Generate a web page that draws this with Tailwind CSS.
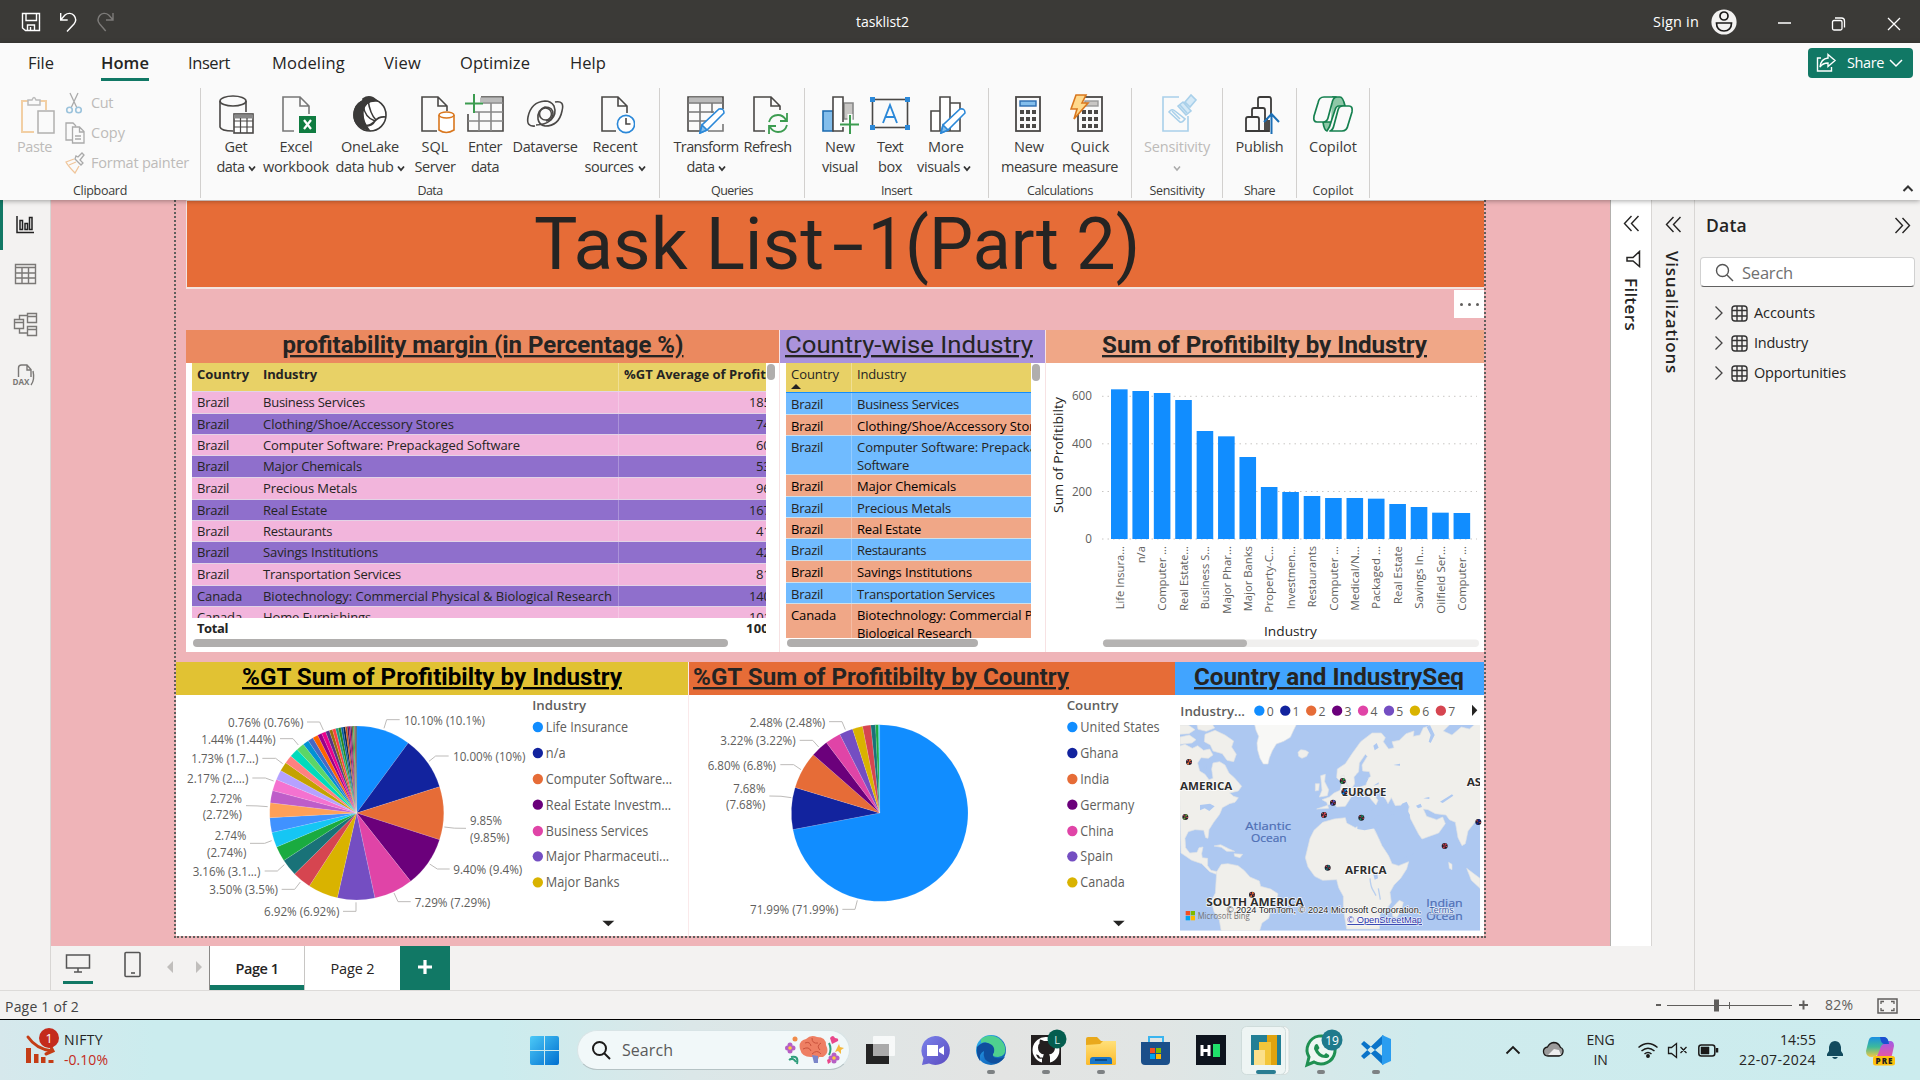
<!DOCTYPE html>
<html lang="en">
<head>
<meta charset="utf-8">
<title>tasklist2</title>
<script src="https://cdn.jsdelivr.net/npm/@tailwindcss/browser@4"></script>
</head>
<body class="w-[1920px] h-[1080px] overflow-hidden bg-[#f3f2f1] font-['Open_Sans','Noto_Sans',sans-serif] text-[#252423] whitespace-nowrap">

<!-- Title bar -->
<header class="h-[43px] bg-[#3b3a37] text-white flex items-center relative">
  <svg class="ml-[21px] mt-px" width="94" height="22" viewBox="0 0 94 22" fill="none" stroke="#fff" stroke-width="1.4">
    <path d="M1.500 2.500h17v17h-14l-3-2.500zM5 2.500v7h10.500v-7M6.500 19.500v-5.500h7v5.500M9.500 16v3"/>
    <path d="M39.700 2v7h7M40 8.500l4-4.500c3-2.500 7-2 9 .5s2 6 0 8.500L46 20.500"/>
    <path d="M92 2v7h-7M91.700 8.500l-4-4.500c-3-2.500-7-2-9 .5s-2 6 0 8.500l6 7" stroke="#7d7b79"/>
  </svg>
  <div class="ml-[741px] w-[53px] text-[14px] leading-5"><span data-w="53">tasklist2</span></div>
  <div class="ml-[744px] w-[46px] text-[14.500px]"><span data-w="46">Sign in</span></div>
  <svg class="ml-[12px]" width="26" height="26" viewBox="0 0 26 26"><circle cx="13" cy="13" r="12.600" fill="#f3f2f1"/><g fill="none" stroke="#1b1a19" stroke-width="1.700"><circle cx="13" cy="7" r="4"/><path d="M5.500 14h15c0 5-3 8-7.500 8s-7.500-3-7.500-8z"/></g></svg>
  <svg class="ml-[40px] mt-1" width="124" height="16" viewBox="0 0 124 16" fill="none" stroke="#fff" stroke-width="1.300"><path d="M1 7h13M111 2l12 12M123 2l-12 12"/><rect x="55.500" y="4.500" width="9.500" height="9.500" rx="1.500"/><path d="M58 2h6.500q3 0 3 3v6.500"/></svg>
</header>

<!-- Ribbon -->
<section class="h-[157px] bg-[#fafafa] relative z-10 shadow-[0_1px_5px_rgba(0,0,0,0.35)]">
  <nav class="h-[45px] flex items-start pl-[28px] pt-[8px] text-[16.500px] leading-6">
    <div class="w-[73px]"><span data-w="26">File</span></div>
    <div class="w-[87px] font-semibold"><div class="w-[48px] h-[30px] border-b-[3px] border-[#117865]"><span data-w="48">Home</span></div></div>
    <div class="w-[84px]"><span data-w="42">Insert</span></div>
    <div class="w-[112px]"><span data-w="73">Modeling</span></div>
    <div class="w-[76px]"><span data-w="37">View</span></div>
    <div class="w-[110px]"><span data-w="70">Optimize</span></div>
    <div><span data-w="36">Help</span></div>
    <div class="ml-auto mr-[7px] -mt-[3px] w-[105px] h-[30px] rounded bg-[#117865] text-white flex items-center pl-[8px] text-[14.500px]">
      <svg width="21" height="20" viewBox="0 0 21 20" fill="none" stroke="#fff" stroke-width="1.400"><path d="M5 5H1.500v13h14v-4M12 1.500l7 6-7 6v-3.500c-4 0-6 1-8 4 .5-5 3-8.500 8-9z"/></svg>
      <span class="ml-[10px]" data-w="37">Share</span>
      <svg class="ml-[5px]" width="14" height="9" viewBox="0 0 14 9" fill="none" stroke="#fff" stroke-width="1.500"><path d="M1 1l6 6 6-6"/></svg>
    </div>
  </nav>

  <div class="flex h-[110px] text-[14.500px] leading-5 text-[#3b3a39]">
    <!-- Clipboard -->
    <div class="w-[201px] border-r border-[#d2d0ce] flex flex-col">
      <div class="flex shrink-0 h-[90px] text-[#bdbbb9]">
        <div class="ml-[17px] w-[36px] pt-[6px]">
          <svg width="38" height="41" viewBox="0 0 38 41" fill="none" stroke-width="2"><path d="M17 38H5V7h6M23 7h6v9" stroke="#f2cfa4"/><path d="M11 11V6h4q2-5 4 0h4v5z" stroke="#bbb" stroke-width="1.500"/><rect x="21" y="17" width="16" height="22" stroke="#b1b0af" stroke-width="1.500" fill="#fafafa"/></svg>
          <div class="mt-[2px]"><span data-w="35">Paste</span></div>
        </div>
        <div class="ml-[11px]">
          <div class="flex h-[30px] items-center"><svg class="mr-[7px]" width="20" height="22" viewBox="0 0 20 22" fill="none" stroke="#aaa" stroke-width="1.300"><path d="M6 1l7 15M14 1L7 16"/><g stroke="#9cc3dc" stroke-width="1.600"><circle cx="5.500" cy="18" r="2.800"/><circle cx="14.500" cy="18" r="2.800"/></g></svg><span data-w="22">Cut</span></div>
          <div class="flex h-[30px] items-center"><svg class="mr-[5px]" width="22" height="22" viewBox="0 0 22 22" fill="none" stroke="#aaa" stroke-width="1.300"><path d="M8 18H2V1h7l3 3M8.500 5h7l4.500 4.500V21H8.500zM15.500 5v5H20M11 14h6M11 17h6"/></svg><span data-w="34">Copy</span></div>
          <div class="flex h-[30px] items-center"><svg class="mr-[5px]" width="22" height="22" viewBox="0 0 22 22" fill="none" stroke="#aaa" stroke-width="1.300"><path d="M11 7l6 6 2-2-3-3 4-5-2-2-4 4-2-1z"/><path d="M10 7L2 10c2 4 5 7 9 11l4-7M5 13l7-3" stroke="#f0c59a"/></svg><span data-w="98">Format painter</span></div>
        </div>
      </div>
      <div class="shrink-0 pt-[3px] text-center text-[12.500px]"><span data-w="54">Clipboard</span></div>
    </div>
    <!-- Data -->
    <div class="w-[459px] border-r border-[#d2d0ce] flex flex-col text-center">
      <div class="flex shrink-0 h-[90px] pl-[9px] pt-[6px]">
        <div class="w-[52px]"><svg class="mx-auto mb-[3px]" width="40" height="40" viewBox="0 0 40 40" fill="none" stroke="#4a4846" stroke-width="1.600"><ellipse cx="17" cy="7" rx="13" ry="5"/><path d="M4 7v26q1 4 13 4M30 7v11"/><rect x="18" y="20" width="19" height="19" fill="#fff"/><path d="M18 22.500h19" stroke="#888" stroke-width="4"/><path d="M18 27h19M18 33h19M24.500 24v15M31 24v15" stroke-width="1.200"/></svg><div><span data-w="23">Get</span></div><div><span data-w="28">data</span><svg class="inline ml-[3px]" width="8" height="7" viewBox="0 0 8 7"><path d="M1 1.500l3 3.500 3-3.500" fill="none" stroke="#333" stroke-width="1.800"/></svg></div></div>
        <div class="w-[68px]"><svg class="mx-auto mb-[3px]" width="40" height="40" viewBox="0 0 40 40" fill="none" stroke="#777" stroke-width="1.600"><path d="M18 37H7V3h17l9 9v8M24 3v9h9"/><rect x="23" y="22" width="17" height="17" fill="#107c41" stroke="none"/><path d="M28 26l7 9M35 26l-7 9" stroke="#fff" stroke-width="2.200"/></svg><div><span data-w="33">Excel</span></div><div><span data-w="66">workbook</span></div></div>
        <div class="w-[80px]"><svg class="mx-auto mb-[3px]" width="40" height="40" viewBox="0 0 40 40" fill="none" stroke="#3b3a39" stroke-width="1.600"><circle cx="20" cy="21" r="16" fill="#fff"/><path d="M13 5q7-5 14 2-12-1-14 10-1 10 6 19Q4 33 4 21q0-10 9-14z" fill="#3b3a39"/><path d="M13 11q2 13 12 16 4-5 11-4M25 27q-3 6-12 5M18 6q2 14 8 20M10 30q8 4 15-3"/></svg><div><span data-w="58">OneLake</span></div><div><span data-w="58">data hub</span><svg class="inline ml-[3px]" width="8" height="7" viewBox="0 0 8 7"><path d="M1 1.500l3 3.500 3-3.500" fill="none" stroke="#333" stroke-width="1.800"/></svg></div></div>
        <div class="w-[50px]"><svg class="mx-auto mb-[3px]" width="40" height="40" viewBox="0 0 40 40" fill="none" stroke="#4a4846" stroke-width="1.600"><path d="M22 37H7V3h16l9 9v5M23 3v9h9"/><g stroke="#d9771e"><path d="M24 21v15q7 5 15 0V21" fill="#fff"/><ellipse cx="31.500" cy="21" rx="7.500" ry="3" fill="#fff"/></g></svg><div><span data-w="27">SQL</span></div><div><span data-w="41">Server</span></div></div>
        <div class="w-[50px]"><svg class="mx-auto mb-[3px]" width="40" height="40" viewBox="0 0 40 40" fill="none" stroke="#4a4846" stroke-width="1.600"><path d="M16 3h22v34H3V20"/><path d="M15 6h22" stroke="#bbb" stroke-width="5"/><path d="M18 9h20M10 18h28M3 27h35M14 18v19M26 9v28" stroke="#888"/><path d="M9 0v19M0 9.500h18" stroke="#3c9c50" stroke-width="2"/></svg><div><span data-w="34">Enter</span></div><div><span data-w="28">data</span></div></div>
        <div class="w-[70px]"><svg class="mx-auto mb-[3px]" width="40" height="40" viewBox="0 0 40 40" fill="none" stroke="#4a4846" stroke-width="1.600"><path d="M30 8q10-2 7 9-3 15-17 15-6-1-7-7-1-9 7-12 8 0 8 7 0 6-7 7"/><path d="M10 32q-9 1-7-9Q6 8 20 7q6 0 9 5 3 8-3 14-6 5-15 5"/><circle cx="20.500" cy="20" r="6"/></svg><div><span data-w="65">Dataverse</span></div></div>
        <div class="w-[70px]"><svg class="mx-auto mb-[3px]" width="40" height="40" viewBox="0 0 40 40" fill="none" stroke="#4a4846" stroke-width="1.600"><path d="M21 37H7V3h16l9 9v7M23 3v9h9"/><circle cx="31" cy="30" r="8.600" stroke="#2b88d8" fill="#fff"/><path d="M31 24v6h4.500"/></svg><div><span data-w="45">Recent</span></div><div><span data-w="49">sources</span><svg class="inline ml-[4px]" width="8" height="7" viewBox="0 0 8 7"><path d="M1 1.500l3 3.500 3-3.500" fill="none" stroke="#333" stroke-width="1.800"/></svg></div></div>
      </div>
      <div class="shrink-0 pt-[3px] text-[12.500px]"><span data-w="25">Data</span></div>
    </div>
    <!-- Queries -->
    <div class="w-[145px] border-r border-[#d2d0ce] flex flex-col text-center">
      <div class="flex shrink-0 h-[90px] pl-[12px] pt-[6px]">
        <div class="w-[68px]"><svg class="mx-auto mb-[3px]" width="40" height="40" viewBox="0 0 40 40" fill="none" stroke="#4a4846" stroke-width="1.600"><path d="M14 37H2V3h35v12"/><path d="M3 6h33" stroke="#bbb" stroke-width="5"/><path d="M2 9h35M2 18h26M2 27h18M14 9v28M26 9v10M37 30v7h-15" stroke="#777"/><path d="M14 39l2-8 17-16q5-1 5 4L21 36z" stroke="#2b88d8" fill="#fff"/><path d="M14 39l2-8 5 5z" fill="#83beec" stroke="#2b88d8"/></svg><div><span data-w="65">Transform</span></div><div><span data-w="28">data</span><svg class="inline ml-[3px]" width="8" height="7" viewBox="0 0 8 7"><path d="M1 1.500l3 3.500 3-3.500" fill="none" stroke="#333" stroke-width="1.800"/></svg></div></div>
        <div class="w-[55px]"><svg class="mx-auto mb-[3px]" width="40" height="40" viewBox="0 0 40 40" fill="none" stroke="#4a4846" stroke-width="1.600"><path d="M17 37H6V3h17l9 9v4M23 3v9h9"/><path d="M21 28q2-7 9-7 5 0 8 5M39 19v8h-7M39 31q-2 7-9 7-5 0-8-5M21 40v-8h7" stroke="#3c9c50" stroke-width="1.800"/></svg><div><span data-w="48">Refresh</span></div></div>
      </div>
      <div class="shrink-0 pt-[3px] text-[12.500px]"><span data-w="42">Queries</span></div>
    </div>
    <!-- Insert -->
    <div class="w-[184px] border-r border-[#d2d0ce] flex flex-col text-center">
      <div class="flex shrink-0 h-[90px] pl-[10px] pt-[6px]">
        <div class="w-[50px]"><svg class="mx-auto mb-[3px]" width="40" height="40" viewBox="0 0 40 40" fill="none" stroke="#4a4846" stroke-width="1.600"><path d="M24 9h9v16h-9z" fill="#c8c6c4" stroke="#888"/><path d="M3 17h10v20H3z" fill="#83beec" stroke="#1c6bb0"/><path d="M13 3h10v34H13z" fill="#fff"/><path d="M30 20v20M20 30.500h20" stroke="#fafafa" stroke-width="5"/><path d="M30 21v19M20 30.500h19" stroke="#3c9c50" stroke-width="2"/></svg><div><span data-w="30">New</span></div><div><span data-w="36">visual</span></div></div>
        <div class="w-[50px]"><svg class="mx-auto mb-[3px]" width="40" height="40" viewBox="0 0 40 40" fill="none" stroke="#4a4846" stroke-width="1.600"><rect x="2.500" y="5.500" width="35" height="28"/><g fill="#2b88d8" stroke="none"><path d="M0 3h5v5H0zM35 3h5v5h-5zM0 31h5v5H0zM35 31h5v5h-5z"/></g><path d="M13 29l7-18 7 18M15.500 23h9" stroke="#2b88d8" stroke-width="1.900"/></svg><div><span data-w="26">Text</span></div><div><span data-w="24">box</span></div></div>
        <div class="w-[58px]"><svg class="ml-[12px] mb-[3px]" width="40" height="40" viewBox="0 0 40 40" fill="none" stroke="#4a4846" stroke-width="1.600"><path d="M4 17h9v20H4zM13 3h10v34H13zM23 9h10v28H23z" fill="#fff"/><path d="M14 39l2-8 17-16q5-1 5 4L21 36z" stroke="#2b88d8" fill="#fff"/><path d="M14 39l2-8 5 5z" fill="#83beec" stroke="#2b88d8"/></svg><div class="pl-[4px]"><span data-w="36">More</span></div><div><span data-w="43">visuals</span><svg class="inline ml-[3px]" width="8" height="7" viewBox="0 0 8 7"><path d="M1 1.500l3 3.500 3-3.500" fill="none" stroke="#333" stroke-width="1.800"/></svg></div></div>
      </div>
      <div class="shrink-0 pt-[3px] text-[12.500px]"><span data-w="31">Insert</span></div>
    </div>
    <!-- Calculations -->
    <div class="w-[143px] border-r border-[#d2d0ce] flex flex-col text-center">
      <div class="flex shrink-0 h-[90px] pl-[11px] pt-[6px]">
        <div class="w-[58px]"><svg class="mx-auto mb-[3px]" width="40" height="40" viewBox="0 0 40 40" fill="none" stroke="#4a4846" stroke-width="1.800"><rect x="7" y="3" width="24" height="34"/><rect x="11" y="7" width="16" height="5" fill="#83beec" stroke="#2b6cb0" stroke-width="1.400"/><path d="M11 18h16M11 25h16M11 32h16" stroke-width="4" stroke-dasharray="4 2"/></svg><div><span data-w="30">New</span></div><div><span data-w="56">measure</span></div></div>
        <div class="w-[64px]"><svg class="mx-auto mb-[3px]" width="40" height="40" viewBox="0 0 40 40" fill="none" stroke="#4a4846" stroke-width="1.800"><rect x="8" y="3" width="24" height="34"/><rect x="15" y="7" width="13" height="5" fill="#c8c6c4" stroke="#999" stroke-width="1.400"/><path d="M12 18h16M12 25h16M12 32h16" stroke-width="4" stroke-dasharray="4 2"/><path d="M6 1h10l-4 8h6L4 25l3-10H1z" fill="#ffd98c" stroke="#d9771e" stroke-width="1.600"/></svg><div><span data-w="39">Quick</span></div><div><span data-w="56">measure</span></div></div>
      </div>
      <div class="shrink-0 pt-[3px] text-[12.500px]"><span data-w="66">Calculations</span></div>
    </div>
    <!-- Sensitivity -->
    <div class="w-[91px] border-r border-[#d2d0ce] flex flex-col text-center">
      <div class="shrink-0 h-[90px] pt-[6px] text-[#bdbbb9]"><svg class="mx-auto mb-[3px]" width="40" height="40" viewBox="0 0 40 40" fill="none" stroke="#a9d0ea" stroke-width="1.600"><path d="M22 3H6v34h25V22"/><path d="M12 18q3-4 6-1l10 8q-3 4-5 3zM15 17l8 8"/><path d="M21 12l5-4 8 9-5 4zM28 8l6-7 5 5-6 7zM23 11l7 8" fill="#d5e9f6"/></svg><div><span data-w="66">Sensitivity</span></div><svg class="mx-auto mt-[8px]" width="8" height="7" viewBox="0 0 8 7"><path d="M1 1.500l3 3.500 3-3.500" fill="none" stroke="#aaa" stroke-width="1.500"/></svg></div>
      <div class="shrink-0 pt-[3px] text-[12.500px]"><span data-w="55">Sensitivity</span></div>
    </div>
    <!-- Share -->
    <div class="w-[74px] border-r border-[#d2d0ce] flex flex-col text-center">
      <div class="shrink-0 h-[90px] pt-[6px]"><svg class="ml-[19px] mb-[3px]" width="40" height="40" viewBox="0 0 40 40" fill="none" stroke="#3b3a39" stroke-width="1.800"><path d="M4 37V25q0-2 2-2h9q2 0 2 2v12zM17 37h10V26M10 22v-6q0-2 2-2h9q2 0 2 2v21M16 13V5q0-2 2-2h9q2 0 2 2v15M25 24v13"/><path d="M29.500 20v20M22 28l7.500-8 7.500 8" stroke="#1c6fb5" stroke-width="2"/></svg><div><span data-w="48">Publish</span></div></div>
      <div class="shrink-0 pt-[3px] text-[12.500px]"><span data-w="31">Share</span></div>
    </div>
    <!-- Copilot -->
    <div class="w-[73px] border-r border-[#d2d0ce] flex flex-col text-center">
      <div class="shrink-0 h-[90px] pt-[6px]"><svg class="mx-auto mb-[3px]" width="42" height="40" viewBox="0 0 42 40" fill="none" stroke="#15804f" stroke-width="1.700" stroke-linejoin="round"><path d="M20 3h8q3 0 5 9h-6q-3 0-4 4l-4 12q-1 5-4 9-3-1-4-9h8" fill="#8dc7a7"/><path d="M12 3h12q-3 1-4 6l-4 15q-1 4-5 4H5q-4 0-3-6L6 9q1-6 6-6z" fill="#fafafa"/><path d="M30 37H18q3-1 4-6l4-15q1-4 5-4h6q4 0 3 6l-4 13q-1 6-6 6z" fill="#fafafa"/></svg><div><span data-w="48">Copilot</span></div></div>
      <div class="shrink-0 pt-[3px] text-[12.500px]"><span data-w="41">Copilot</span></div>
    </div>
    <svg class="ml-auto mr-[6px] mt-[96px]" width="12" height="9" viewBox="0 0 12 9"><path d="M1.500 7L6 2.500 10.500 7" fill="none" stroke="#333" stroke-width="2"/></svg>
  </div>
</section>

<main class="flex h-[790px]">
  <!-- View switcher -->
  <aside class="w-[51px] border-r border-[#d8d6d4] relative">
    <div class="absolute left-0 top-0 w-[3px] h-[50px] bg-[#117865]"></div>
    <svg width="50" height="200" viewBox="0 0 50 200" fill="none" stroke="#7a7876" stroke-width="1.400">
      <path d="M17 16v16.500h17M20 29.500v-9h2.500v9zM25 29.500v-6h2.500v6zM29.500 29.500v-12H32v12z" stroke="#222" stroke-width="1.500"/>
      <path d="M15.500 64.500h20v19h-20zM15.500 67.500h20M15.500 73h20M15.500 78h20M22 67.500v16M28.500 67.500v16"/>
      <path d="M14.500 119.500h9v9h-9zM14.500 122.500h9M27.500 113.500h9v9h-9zM27.500 116.500h9M27.500 126.500h9v9h-9zM27.500 129.500h9M19.500 119v-3.500h8M19.500 129v4h8"/>
      <path d="M18.500 177v-9q0-3 3-3h5.500l4 4.500V177M27 165v5h4M33 171q2 9-2 14"/>
      <text x="12.500" y="185" font-size="8" font-weight="700" fill="#7a7876" stroke="none" textLength="17" lengthAdjust="spacingAndGlyphs">DAX</text>
    </svg>
  </aside>

  <div class="w-[1601px] flex flex-col">
    <div class="flex h-[746px]">
      <!-- Report canvas -->
      <div class="w-[1559px] bg-[#efb4b8] pl-[123px]">
        <div class="w-[1312px] h-[738px] border-2 border-t-0 border-dotted border-[#605e5c] relative">
          <div class="ml-[10px] h-[89px] bg-[#e66c37] border-t border-l border-b-2 border-[#f3e4e0]">
            <svg width="1297" height="86" viewBox="187 201 1297 86"><text y="269" font-family="Roboto" font-size="73" fill="#252423"><tspan x="534" textLength="290" lengthAdjust="spacingAndGlyphs">Task List</tspan><tspan x="832" textLength="32" lengthAdjust="spacingAndGlyphs">-</tspan><tspan x="868" textLength="37" lengthAdjust="spacingAndGlyphs">1</tspan><tspan x="905" textLength="235" lengthAdjust="spacingAndGlyphs">(Part 2)</tspan></text></svg>
          </div>
          <div class="absolute right-0 top-[90px] w-[30px] h-[28px] bg-white flex items-center justify-center gap-[5px]"><i class="size-[3px] rounded-full bg-[#605e5c]"></i><i class="size-[3px] rounded-full bg-[#605e5c]"></i><i class="size-[3px] rounded-full bg-[#605e5c]"></i></div>

          <div class="mt-[41px] ml-[10px] flex h-[322px]">
            <!-- Profitability table -->
            <section class="w-[593px] bg-white">
              <svg class="bg-[#eb895f]" width="593" height="33" viewBox="186 330 593 33"><text x="282.500" y="353" font-family="Roboto" font-size="23.500" font-weight="700" fill="#252423" textLength="401" lengthAdjust="spacingAndGlyphs" text-decoration="underline">profitability margin (in Percentage %)</text></svg>
              <div class="flex">
                <div class="ml-[6px] w-[574px] h-[255px] overflow-hidden text-[13px]" id="t1"></div>
                <div class="ml-px mt-[1px] w-[8px] h-[16px] rounded bg-[#b0aead]"></div>
              </div>
              <div class="ml-[6px] w-[574px] h-[21px] flex font-bold text-[13px] leading-5 overflow-hidden"><div class="w-[554px] pl-[5px] shrink-0"><span data-w="31">Total</span></div><div class="shrink-0"><span data-w="23">100</span></div></div>
              <div class="ml-[7px] w-[535px] h-[8px] rounded bg-[#b0aead]"></div>
            </section>
            <!-- Country table -->
            <section class="w-[266px] bg-white border-l border-[#f7e2e3]">
              <svg class="bg-[#ab93dc]" width="265" height="33" viewBox="780 330 265 33"><text x="785" y="353" font-family="Roboto" font-size="23.500" fill="#252423" textLength="248" lengthAdjust="spacingAndGlyphs" text-decoration="underline">Country-wise Industry</text></svg>
              <div class="flex">
                <div class="ml-[6px] w-[245px] h-[275px] overflow-hidden text-[13px]" id="t2"></div>
                <div class="ml-px mt-[1px] w-[8px] h-[17px] rounded bg-[#b0aead]"></div>
              </div>
              <div class="ml-[7px] mt-[1px] w-[191px] h-[8px] rounded bg-[#b0aead]"></div>
            </section>
            <!-- Bar chart -->
            <section class="w-[439px] bg-white border-l border-[#f7e2e3]">
              <svg class="bg-[#f0a787]" width="438" height="33" viewBox="1046 330 438 33"><text x="1102" y="353" font-family="Roboto" font-size="23.500" font-weight="700" fill="#252423" textLength="325" lengthAdjust="spacingAndGlyphs" text-decoration="underline">Sum of Profitibilty by Industry</text></svg>
              <svg id="bars" width="438" height="289" viewBox="1046 363 438 289"></svg>
            </section>
          </div>

          <div class="mt-[10px] flex h-[274px]">
            <section class="w-[512px] bg-white">
              <svg class="bg-[#e1c233]" width="512" height="33" viewBox="176 662 512 33"><text x="242" y="685" font-family="Roboto" font-size="23.500" font-weight="700" fill="#000" textLength="380" lengthAdjust="spacingAndGlyphs" text-decoration="underline">%GT Sum of Profitibilty by Industry</text></svg>
              <svg id="pie1" width="512" height="241" viewBox="18 120 1536 723"></svg>
            </section>
            <section class="w-[487px] bg-white border-l border-[#fae9ea]">
              <svg class="bg-[#e66c37]" width="486" height="33" viewBox="689 662 486 33"><text x="693" y="685" font-family="Roboto" font-size="23.500" font-weight="700" fill="#252423" textLength="376" lengthAdjust="spacingAndGlyphs" text-decoration="underline">%GT Sum of Profitibilty by Country</text></svg>
              <svg id="pie2" width="486" height="241" viewBox="27 120 1458 723"></svg>
            </section>
            <section class="w-[309px] bg-white">
              <svg class="bg-[#41a4ff]" width="309" height="33" viewBox="1175 662 309 33"><text x="1194" y="685" font-family="Roboto" font-size="23.500" font-weight="700" fill="#252423" textLength="270" lengthAdjust="spacingAndGlyphs" text-decoration="underline">Country and IndustrySeq</text></svg>
              <svg id="map" width="309" height="241" viewBox="45 120 927 723">
                <defs><clipPath id="mc"><path d="M60 210h900v617H60z"/></clipPath></defs>
                <g clip-path="url(#mc)">
                  <path d="M60 210h900v617H60z" fill="#adc8f1"/>
                  <g fill="#f0efeb" stroke="#dfe3e6" stroke-width="2" stroke-linejoin="round">
                    <path d="M283 205h128l-10 20-10 22-20 12-22 8-12 20-9 22-4 18h-14l-10-17-7-24-2-22 5-20-8-18z" fill="#f8f8f6"/>
                    <path d="M55 210h30l20 14-18 12-32 2zM110 205l44-2 10 16-25 10-25-6zM135 238l30-12 30 14 26 18-6 18 14 22-8 22-20-4-14-20-28-8-8-18-18-10zM60 246l28-6 20 14-12 10-36 4z"/>
                    <path d="M55 274l20-6 22 12 16-8 18 14 18-4 10 18-14 10-22-2-10 16 6 24 16 10 12 16 12-4-4-28 4-18 20-4 16 10 12 24 16 14 22 26-10 14-26 6 12 10 14 4-10 14-16 4-22 12-8 20-18 24-14 22-3 26-7-2-6-22-26-2-20 6-10 20 2 28 12 16 22-2 6-14 12-2-4 20 2 12 16 2 0 22 10 14 20 4-4 8-20-8-24-24-30-10-32-22z"/>
                    <path d="M414 292l8-8 14 2 10 6-6 12-14 6-10-6zM162 573l20-4 24 12 18 8-24 0-16-12zM222 596l26 2-8 10-16-4z"/>
                    <path d="M170 650l14-22 20-2 30 6 18 14 18 20 28 12 4 16 30 8 22 14-4 18-16 20-8 36-20 14-8 26-14 20-20 30h-72l-8-50-6-34-16-26-8-32 12-24z"/>
                    <path d="M482 362l14-4-2 22 12 24-4 18-24 4 8-20zM466 386l12 0-2 20-10 2z"/>
                    <path d="M470 462l36-2-6-18-14-8 22-8 14-12 18-8 6-24-4-18 10-4 4 22 14 16 30-2 18-6 4-18 10-8-4-14-20-2-2-18 16-26-6-6-18 26-2 26-14 16 2 20-8 14-14-6-4-18-16 4-12-12 2-26 24-16 20-30 26-36 34-26 28 0 12 14-6 12 16 22 16-4-6-18 22-4 20-20 24-8-2 16 20-4 10-22 14-4 30-28 24 0 10 24-18 18 26 12 28-24 24 6 26-22 68 0v390l-22-40 4-30-20-10-16-18-22 8-22 28-8 38-10 6-12-24-8-46-18-8-10-14-32-4-22-12-14-2 10 22 30 10 18-8 8 20-20 28-50 18-10-14-24-46-8-20 4-18-20-4-22 2-8-16-4-8-10 18-6-12-18-22-14-10-16 0 24 34-6 14-14-16-18-26-14-6-20 10-12 20-14 22-26 2-8-12z"/>
                    <path d="M450 550l12-24 26-24 34-10 34-4 4 16 26 14 18-10 34 6 12 22 16 36 20 30 10 24 20 6 30-12-6 22-18 28-20 20-12 22 4 30-14 20-20 16-2 44H560l-10-60 0-38-14-26-6-24-42 2-24-12-20-28-8-28z"/>
                    <path d="M718 736l12 6-6 24-14 22-12-4-2-24 12-14zM866 622l10 6 0 16-8-4zM920 640l40 30v30l-26-24z"/>
                  </g>
                  <g fill="#adc8f1">
                    <path d="M634 466l12-14 14 4 14-8 8 14 22 16-26 6-26-2-12 4zM726 446l14-6 6 12-6 10 10 18-2 18-16-2-6-20-6-18zM588 480l18 6 10 20 8-2 0-18 14-4 8 4-6 12 18 4-6 16-38 8-22-4 0-16zM640 524l18 24 18 34 20 34 12 8 24-14 28-14-22 22-26 8-10-4-20-34-18-30zM590 356l14 2-2 14 24-2-6 12-24 0zM640 272l10-8 6 14-12 8zM810 210l14 30-12 24-6-4 6-20-12-24zM120 450l30-4 14 8-16 14-14-8-14 6zM768 452l14-6 4 10-12 4zM640 658l12-2 2 14-10 4z"/>
                    <path d="M840 440l36-22 4 4-32 22zM700 330l20-4v6zM790 430l18-4 0 6zM640 392l16-10 0 6zM130 340l10-12 0 16zM100 395l20 4v4z"/>
                  </g>
                  <path d="M630 670q2 24 8 34t10 18M655 700l6 34" fill="none" stroke="#b9cfee" stroke-width="4"/>
                </g>
              </svg>
            </section>
          </div>
        </div>
      </div>
      <!-- Filters pane -->
      <aside class="w-[42px] bg-white border-l border-[#b3b0ad] border-r border-r-[#d8d6d4] relative flex flex-col items-center">
        <svg class="mt-[15px]" width="17" height="17" viewBox="0 0 17 17" fill="none" stroke="#252423" stroke-width="1.400"><path d="M8.500 1L1.500 8.500l7 7.500M15.500 1L8.500 8.500l7 7.500"/></svg>
        <svg class="mt-[18px] ml-[4px]" width="16" height="18" viewBox="0 0 16 18" fill="none" stroke="#252423" stroke-width="1.500"><path d="M14.500 1.500v15L8 11H2V7.500h6z"/></svg>
        <div class="mt-[10px] mr-px text-[17px] leading-5 font-semibold [writing-mode:vertical-rl]"><span data-h="53">Filters</span></div>
      </aside>
    </div>
    <!-- Page tabs -->
    <div class="h-[44px] flex items-start">
      <div class="ml-[12px] w-[30px] h-[38px] border-b-[3px] border-[#117865] pt-[8px]"><svg class="mx-auto" width="26" height="19" viewBox="0 0 26 19" fill="none" stroke="#555" stroke-width="1.500"><path d="M1.500 1h23v13h-23zM13 14v4M9 18h8"/></svg></div>
      <svg class="ml-[31px] mt-[5px]" width="18" height="27" viewBox="0 0 18 27" fill="none" stroke="#555" stroke-width="1.600"><rect x="1" y="1.500" width="15" height="24" rx="1"/><path d="M7 22h4"/></svg>
      <svg class="ml-[25px] mt-[15px]" width="36" height="12" viewBox="0 0 36 12" fill="#c0bebc"><path d="M6 0v12L0 6zM29 0v12l6-6z"/></svg>
      <div class="ml-[6px] w-[96px] h-[44px] bg-white border-l border-[#8a8886] border-r border-r-[#c8c6c4] text-center text-[14.500px] leading-[46px] font-semibold text-[#252423] relative"><span data-w="43">Page 1</span><i class="absolute bottom-0 left-0 w-full h-[5px] bg-[#117865]"></i></div>
      <div class="w-[95px] h-[44px] bg-white text-center text-[14.500px] leading-[46px]"><span data-w="44">Page 2</span></div>
      <div class="w-[50px] h-[44px] bg-[#117865] flex items-center justify-center pb-[3px]"><svg width="14" height="14" viewBox="0 0 14 14"><path d="M7 0v14M0 7h14" stroke="#fff" stroke-width="3.200"/></svg></div>
    </div>
  </div>

  <!-- Visualizations pane -->
  <aside class="w-[43px] border-r border-[#d8d6d4] flex flex-col items-center">
    <svg class="mt-[16px]" width="17" height="17" viewBox="0 0 17 17" fill="none" stroke="#252423" stroke-width="1.400"><path d="M8.500 1L1.500 8.500l7 7.500M15.500 1L8.500 8.500l7 7.500"/></svg>
    <div class="mt-[18px] mr-[3px] text-[17px] leading-5 font-semibold [writing-mode:vertical-rl]"><span data-h="123">Visualizations</span></div>
  </aside>
  <!-- Data pane -->
  <aside class="flex-1 pl-[5px] pr-[5px]">
    <div class="h-[57px] pl-[6px] flex items-center justify-between pb-[7px]"><span class="text-[17.500px] font-semibold" data-w="41">Data</span>
      <svg class="mr-[4px]" width="17" height="17" viewBox="0 0 17 17" fill="none" stroke="#252423" stroke-width="1.400"><path d="M1.500 1l7 7.500-7 7.500M8.500 1l7 7.500-7 7.500"/></svg></div>
    <div class="h-[30px] rounded bg-white border border-[#d1d1d1] border-b-[#616161] flex items-center pl-[14px] text-[16.500px] text-[#707070]"><svg width="19" height="19" viewBox="0 0 19 19" fill="none" stroke="#555" stroke-width="1.400"><circle cx="7.500" cy="7.500" r="6"/><path d="M12 12l6 6"/></svg><span class="ml-[8px] mt-[2px]" data-w="51">Search</span></div>
    <div id="tables" class="pt-[11px] text-[14.500px]"></div>
  </aside>
</main>

<!-- Status bar -->
<footer class="h-[30px] border-t border-[#dddbd9] border-b border-b-black flex items-center">
  <span class="ml-[5px] mt-[2px] text-[14px] text-[#444]" data-w="74">Page 1 of 2</span>
  <svg class="ml-auto mr-[18px]" width="247" height="24" viewBox="1655 993 247 24" fill="none" stroke="#605e5c"><path d="M1656 1005h5M1799 1005h9M1803.500 1000.500v9" stroke-width="2"/><path d="M1667 1005.500h125M1729.500 1002v7"/><path d="M1714 999.500h5v12h-5z" fill="#605e5c" stroke="none"/><text x="1825" y="1010" font-size="14" fill="#605e5c" stroke="none" textLength="28">82%</text><path d="M1878 999h19v14h-19z" stroke-width="1.500"/><path d="M1881 1004v-2.500h3M1891 1001.500h3v2.500M1881 1008v2.500h3M1894 1008v2.500h-3" stroke-width="1.300"/></svg>
</footer>

<!-- Taskbar -->
<div class="h-[60px] relative flex items-center bg-[linear-gradient(90deg,#d6e8ec_0%,#cbecee_8%,#cbecee_26%,#dbe7e8_36%,#e3e4e3_52%,#e1e5e4_60%,#cfebed_74%,#cbecee_100%)]">
  <svg class="ml-[25px]" width="36" height="48" viewBox="25 1026 36 48"><path d="M28 1037q8 12 24 14M46 1054l7-3-3-6" fill="none" stroke="#c43d16" stroke-width="3" stroke-linecap="round"/><path d="M26 1048h5v15h-5zM34 1054h4.500v9H34zM41 1057h4.500v6H41zM48.500 1060h5v3h-5z" fill="#c43d16"/><circle cx="49" cy="1038" r="10" fill="#c42b1c"/><text x="49" y="1042.500" text-anchor="middle" font-size="12.500" fill="#fff">1</text></svg>
  <div class="ml-[3px] w-[46px] text-[14px] leading-5"><div><span data-w="39">NIFTY</span></div><div class="text-[#c42b1c]"><span data-w="44">-0.10%</span></div></div>
  <svg class="ml-[420px]" width="29" height="29" viewBox="0 0 29 29"><defs><linearGradient id="wg" x2="1" y2="1"><stop stop-color="#4cc9f7"/><stop offset="1" stop-color="#006fd0"/></linearGradient></defs><path d="M2 0h12v14H0V2q0-2 2-2zM15 0h12q2 0 2 2v12H15zM0 15h14v14H2q-2 0-2-2zM15 15h14v12q0 2-2 2H15z" fill="url(#wg)"/></svg>
  <div class="ml-[18px] w-[273px] h-[40px] rounded-full bg-[#f1f8f9] border border-[#d8e4e6] border-b-[#b5c3c5] flex items-center pl-[13px] text-[16px] text-[#5a5a5a]">
    <svg width="20" height="20" viewBox="0 0 20 20" fill="none" stroke="#1b1a19" stroke-width="2"><circle cx="8.500" cy="8.500" r="6.500"/><path d="M13 13l6 6"/></svg>
    <span class="ml-[11px]" data-w="51">Search</span>
    <svg class="ml-auto mr-[4px]" width="60" height="30" viewBox="0 0 60 30"><path d="M15 14q-2-8 6-10 5-5 11-2 9 0 9 8 4 8-3 12l-4 0-2 5-4-5q-11 1-13-8z" fill="#ee7f63"/><path d="M20 8q5-2 6 3M27 3q0 6 6 5M36 8q-5 3-1 7M18 14q6-3 8 2M27 19q5-5 9 0" fill="none" stroke="#c9523c"/><path d="M27 20l2 8 4 0 0-7z" fill="#7b86c9"/><g fill="#b65fc4"><circle cx="5" cy="10" r="2.500"/><circle cx="8" cy="13" r="2.500"/><circle cx="5" cy="16" r="2.500"/><circle cx="2.500" cy="13" r="2.500"/><circle cx="49" cy="20" r="2.500"/><circle cx="52" cy="23" r="2.500"/><circle cx="49" cy="26" r="2.500"/><circle cx="46" cy="23" r="2.500"/></g><circle cx="5" cy="13" r="1.800" fill="#ffc83d"/><circle cx="49" cy="23" r="1.800" fill="#ffc83d"/><path d="M45 3q3-4 5 0 4 0 3 3l-6 3zM42 25q3-3 4 2l-3 2z" fill="#e9478b"/><path d="M44 8q3 6 0 12M6 22q8-2 6 7M4 25q4-3 7 2" fill="none" stroke="#2f9e7c" stroke-width="2"/><path d="M54 9l1 3 4 1-3 2 0 4-3-3-3 1 2-4z" fill="#f5b83d"/><circle cx="10" cy="4" r="2.500" fill="#f08c4a"/></svg>
  </div>
  <svg class="ml-[9px]" width="545" height="52" viewBox="859 1024 545 52">
    <defs>
      <linearGradient id="eg" x2="1" y2="1"><stop stop-color="#35c1f1"/><stop offset=".5" stop-color="#1a7bd0"/><stop offset="1" stop-color="#0c59a4"/></linearGradient>
      <linearGradient id="fg" x2="0" y2="1"><stop stop-color="#ffe07a"/><stop offset="1" stop-color="#fcbb2c"/></linearGradient>
      <linearGradient id="cg" x2="1" y2="1"><stop stop-color="#7b83eb"/><stop offset="1" stop-color="#5b4bc0"/></linearGradient>
    </defs>
    <path d="M866 1044h23v20h-23z" fill="#242424"/><rect x="873" y="1036" width="22" height="20" rx="1" fill="#fff" fill-opacity=".75"/><path d="M873 1044h16v12h-16z" fill="#aaa"/>
    <path d="M935 1036a14.500 14.500 0 1 1-6 27.500l-7 1.500 1.500-7A14.500 14.500 0 0 1 935 1036z" fill="url(#cg)"/><path d="M927 1045h11v11h-11zM939 1049l5-3v9l-5-3z" fill="#fff"/>
    <circle cx="991" cy="1050" r="15" fill="url(#eg)"/><path d="M981 1039a15 15 0 0 1 24 8q2 9-7 10-6 0-5-3 3-4-2-9-4-4-10-2z" fill="#4fd08f"/><path d="M977 1047q7-8 15-2 4 4 1 9-1 3 3 4 5 1 9-1-6 8-14 6-9-3-7-12-5 2-4 10-4-6-3-14z" fill="#0f4f9e"/>
    <path d="M1031 1035h30v30h-30z" fill="#231f20"/><path d="M1046 1037a13 13 0 0 0-4 25.500v-4q-4 1-5-2l-1-2q3 0 4 3h3q0-2 1-3-6-1-6-7 0-3 1.500-4 0-2 .5-4 2 0 4 1.500h5q2-1.500 4-1.500 .5 2 .5 4 1.500 1 1.500 4 0 6-6 7 1 1 1 3v5a13 13 0 0 0-4-25.500z" fill="#fff"/><circle cx="1057" cy="1039" r="9.500" fill="#045d4f"/><text x="1057" y="1043.500" text-anchor="middle" font-size="11" fill="#d8eee9">L</text>
    <path d="M1086 1039q0-2 2-2h9l4 4h13q2 0 2 2v20q0 2-2 2h-26q-2 0-2-2z" fill="#e9a91c"/><path d="M1086 1045l14-1 3-3h13v22q0 2-2 2h-26q-2 0-2-2z" fill="url(#fg)"/><path d="M1090 1064v-4q0-3 3-3h16q3 0 3 3v4z" fill="#1976c8"/><path d="M1095 1060h12" stroke="#0a4d8c" stroke-width="2"/>
    <path d="M1141 1042h29v19q0 4-4 4h-21q-4 0-4-4z" fill="#1b4f8a"/><path d="M1149 1042v-5h14v5" fill="none" stroke="#3bb5ef" stroke-width="2"/><path d="M1150 1048h5v5h-5z" fill="#f25022"/><path d="M1156 1048h5v5h-5z" fill="#7fba00"/><path d="M1150 1054h5v5h-5z" fill="#00a4ef"/><path d="M1156 1054h5v5h-5z" fill="#ffb900"/>
    <path d="M1196 1035h30v30h-30z" fill="#0e141e"/><path d="M1202 1045v11M1209 1045v11M1202 1050.500h7" stroke="#fff" stroke-width="3" fill="none"/><path d="M1213 1044h7v13h-7z" fill="#1fe06a"/>
    <rect x="1246" y="1026.500" width="43" height="48" rx="5" fill="#f4f8f7" stroke="#d4dedd"/><rect x="1241.500" y="1026.500" width="44" height="48" rx="5" fill="#eef5f4" stroke="#cfdcdb"/><path d="M1251 1035h30v30h-30z" fill="#227f95"/><path d="M1267 1035h10v30h-10z" fill="#e0a30e"/><path d="M1259 1042h12v23h-12z" fill="#f3c63a"/><path d="M1254 1050h11v15h-11z" fill="#fbe08a"/><rect x="1256" y="1070" width="20" height="4" rx="2" fill="#2a7d92"/>
    <path d="M1307 1065l2-8a14 14 0 1 1 5 5z" fill="#eef7f3" stroke="#1f9052" stroke-width="3"/><path d="M1315 1045q2-2 3 0l1.500 3-1.500 2q2 4 6 5l2-2 3 2q1 2-2 3-9 1-13-9 0-2 1-4z" fill="#1f9052"/><circle cx="1332" cy="1040" r="10.500" fill="#1f7a8c"/><text x="1332" y="1044.500" text-anchor="middle" font-size="12" fill="#fff">19</text>
    <path d="M1361 1044l3-3 22 18-3 6zM1361 1056l3 3 22-18-3-6z" fill="#0a74c9"/><path d="M1382 1035l9 4v22l-9 4z" fill="#2a9df0"/>
    <g fill="#7d8183"><rect x="987" y="1070" width="8" height="4" rx="2"/><rect x="1042" y="1070" width="8" height="4" rx="2"/><rect x="1097" y="1070" width="8" height="4" rx="2"/><rect x="1317" y="1070" width="8" height="4" rx="2"/><rect x="1372" y="1070" width="8" height="4" rx="2"/></g>
  </svg>
  <svg class="ml-auto" width="62" height="24" viewBox="1504 1038 62 24" fill="none"><path d="M1506.500 1053.500l6.500-6.500 6.500 6.500" stroke="#1b1a19" stroke-width="1.800"/><path d="M1548 1056q-4 0-4.500-4t4-5q2-4 6-4.500 5 0 7 5 3 1 2.500 4.500t-4 4z" fill="#9b9b9b" stroke="#1b1a19" stroke-width="1.300"/><path d="M1548 1055l6-6 5 1 2 5z" fill="#eee"/></svg>
  <div class="ml-[20px] w-[29px] text-[14px] leading-5 text-center"><div><span data-w="28">ENG</span></div><div><span data-w="14">IN</span></div></div>
  <svg class="ml-[22px]" width="82" height="20" viewBox="1637 1040 82 20" fill="none" stroke="#1b1a19" stroke-width="1.500"><path d="M1638.500 1047.500q9.500-8 19 0M1641.500 1051q6.500-5.500 13 0M1644.500 1054q3.500-3 7 0"/><circle cx="1648" cy="1056" r="1.200" fill="#1b1a19"/><path d="M1668.500 1047.500h3l5-4v14l-5-4h-3zM1680.500 1047l6 6M1686.500 1047l-6 6" stroke-width="1.300"/><rect x="1698.800" y="1045" width="16" height="11" rx="2.500"/><path d="M1701 1047h8v7h-8z" fill="#1b1a19" stroke-width=".5"/><path d="M1717 1048v4.500" stroke-width="2.500"/></svg>
  <div class="ml-[20px] w-[77px] text-[14px] leading-5 text-right"><div><span data-w="36">14:55</span></div><div><span data-w="77">22-07-2024</span></div></div>
  <svg class="ml-[10px] mr-[24px]" width="70" height="32" viewBox="1826 1034 70 32">
    <defs><linearGradient id="c1" x2="0" y2="1"><stop stop-color="#1a8fe3"/><stop offset=".5" stop-color="#3dba9a"/><stop offset="1" stop-color="#f5c842"/></linearGradient><linearGradient id="c2" x2="0" y2="1"><stop stop-color="#a05ae8"/><stop offset="1" stop-color="#f0569a"/></linearGradient></defs>
    <path d="M1827 1056v-2l2-3v-4q1-6 6-6t6 6v4l2 3v2zM1832 1057h6q-3 4-6 0z" fill="#134b5e"/>
    <path d="M1878 1044q2-3 6-3h6q4 0 4 5l-2 9q-1 4-5 4h-10z" fill="url(#c2)"/><path d="M1872 1037h12q4 0 5 7h-4q-4 0-5 5l-2 5q-2 3-6 3-6 0-6-6l2-8q1-6 4-6z" fill="url(#c1)"/><path d="M1880 1037h4q4 0 5 7h-5q-3 0-4-7z" fill="#1b4fd0"/>
    <rect x="1873" y="1056" width="22" height="9.500" rx="2.500" fill="#ffc20e"/><text x="1875.500" y="1063.800" font-size="8" font-weight="800" fill="#222" textLength="17">PRE</text>
  </svg>
</div>

<script>
const $ = id => document.getElementById(id);

// Profitability table: row height, country, industry, visible value, name width
const rows1 = [
  [22,'Brazil','Business Services','185',102],[21,'Brazil','Clothing/Shoe/Accessory Stores','74',191],
  [21,'Brazil','Computer Software: Prepackaged Software','60',257],[22,'Brazil','Major Chemicals','53',99],
  [22,'Brazil','Precious Metals','96',94],[21,'Brazil','Real Estate','167',64],[21,'Brazil','Restaurants','41',69],
  [22,'Brazil','Savings Institutions','42',115],[22,'Brazil','Transportation Services','81',138],
  [21,'Canada','Biotechnology: Commercial Physical & Biological Research','140',349],[21,'Canada','Home Furnishings','101',108]];
$('t1').innerHTML =
  `<div class="flex h-[28px] bg-[#e8d166] font-bold leading-[22px]"><div class="w-[64px] shrink-0 pl-[5px]"><span data-w="52">Country</span></div><div class="w-[363px] shrink-0 pl-[7px] border-r border-[#f0df94]"><span data-w="54">Industry</span></div><div class="shrink-0 pl-[5px]"><span data-w="142">%GT Average of Profit</span></div></div>` +
  rows1.map(([h,c,n,v,w],i) => `<div class="flex border-t border-[#e3d3e6] leading-[21px] ${i%2 ? 'bg-[#8f6fcc]' : 'bg-[#f2b5dc]'}" style="height:${h}px"><div class="w-[64px] shrink-0 pl-[5px]"><span data-w="${c=='Brazil'?32:45}">${c}</span></div><div class="w-[363px] shrink-0 pl-[7px] border-r border-white/25"><span data-w="${w}">${n.replace('&','&amp;')}</span></div><div class="shrink-0 ${v.length>2?'pl-[130px]':'pl-[137px]'}"><span data-w="${v.length*7.2}">${v}</span></div></div>`).join('');

const rows2 = [
  [22,'Brazil',['Business Services'],[102]],[21,'Brazil',['Clothing/Shoe/Accessory Stores'],[191]],
  [39,'Brazil',['Computer Software: Prepackaged','Software'],[202,52]],[22,'Brazil',['Major Chemicals'],[99]],
  [21,'Brazil',['Precious Metals'],[94]],[21,'Brazil',['Real Estate'],[64]],[22,'Brazil',['Restaurants'],[69]],
  [22,'Brazil',['Savings Institutions'],[115]],[21,'Brazil',['Transportation Services'],[138]],
  [40,'Canada',['Biotechnology: Commercial Physical','Biological Research'],[216,115]]];
$('t2').innerHTML =
  `<div class="flex h-[29px] bg-[#e8d166] leading-[22px]"><div class="w-[65px] shrink-0 pl-[5px] relative"><span data-w="48">Country</span><svg class="absolute left-[5px] top-[21px]" width="10" height="5"><path d="M0 5l5-5 5 5z" fill="#222"/></svg></div><div class="flex-1 pl-[5px] border-l border-[#f0df94]"><span data-w="49">Industry</span></div></div>` +
  rows2.map(([h,c,n,w],i) => `<div class="flex border-t ${i ? 'border-[#cfe0ea]' : 'border-[#118dff]'} ${i%2 ? 'bg-[#f0a787] text-black' : 'bg-[#70bbff]'}" style="height:${h}px"><div class="w-[65px] shrink-0 pl-[5px] leading-[22px]"><span data-w="${c=='Brazil'?32:45}">${c}</span></div><div class="shrink-0 pl-[5px] border-l border-white/25 pt-[2px] leading-[18px]">${n.map((s,k)=>`<div><span data-w="${w[k]}">${s}</span></div>`).join('')}</div></div>`).join('');

$('tables').innerHTML = [['Accounts',61],['Industry',54],['Opportunities',92]].map(([n,w]) =>
  `<div class="h-[30px] flex items-center pl-[14px]"><svg width="10" height="16" viewBox="0 0 10 16" fill="none" stroke="#444" stroke-width="1.300"><path d="M1.500 1.500L8 8l-6.500 6.500"/></svg><svg class="ml-[7px] mr-[6px]" width="17" height="17" viewBox="0 0 17 17" fill="none" stroke="#333" stroke-width="1.400"><rect x="1" y="1" width="15" height="15" rx="3"/><path d="M1 5.500h15M1 11h15M6 1v15M11 1v15"/></svg><span data-w="${w}">${n}</span></div>`).join('');

// SVG text helper: fixed run width between two x positions
const tx = (x1,x2,y,s,size,extra='') => `<text x="${x1}" y="${y}" font-size="${size}" textLength="${x2-x1}" lengthAdjust="spacingAndGlyphs" ${extra}>${s}</text>`;

// Bar chart
const tops = [208,213,219,240,333,349,411,501,516,528,534,534,536,552,561,578,579];
const names = [['Life Insura...',190],['n/a',52],['Computer ...',194],['Real Estate...',194],['Business S...',190],['Major Phar...',203],['Major Banks',196],['Property-C...',200],['Investmen...',190],['Restaurants',184],['Computer ...',194],['Medical/N...',194],['Packaged ...',188],['Real Estate',174],['Savings In...',188],['Oilfield Ser...',203],['Computer ...',194]];
let b = '';
[[396.3,'600'],[443.8,'400'],[491.5,'200'],[539,'0']].forEach(([y,s]) => {
  b += `<path d="M1102 ${y}H1477" stroke="#c8c6c4" stroke-dasharray="1.500 4"/>` + tx(1092-s.length*6.700,1092,y+4,s,12,'fill="#605e5c"');
});
tops.forEach((t,i) => {
  const x = 1111 + i*21.41, y = 320 + t/3, len = names[i][1]/3;
  b += `<rect x="${x}" y="${y}" width="16.600" height="${539-y}" fill="#118dff"/>`;
  b += `<text transform="translate(${x+12.500} ${546+len}) rotate(-90)" font-size="11.500" fill="#605e5c" textLength="${len}" lengthAdjust="spacingAndGlyphs">${names[i][0]}</text>`;
});
b += `<text transform="translate(1063 513) rotate(-90)" font-size="13.500" fill="#252423" textLength="116" lengthAdjust="spacingAndGlyphs">Sum of Profitibilty</text>` + tx(1264,1317,636,'Industry',13.500,'fill="#252423"');
b += `<rect x="1103" y="639.500" width="376" height="7.500" rx="3.700" fill="#f0efee"/><rect x="1103" y="639.500" width="144" height="7.500" rx="3.700" fill="#b5b3b2"/>`;
$('bars').innerHTML = b;

// Pies
function pie(cx, cy, r, stops) {
  let a = 0, out = '';
  for (const [end, col] of stops) {
    const p = q => { const t = q/100*2*Math.PI; return (cx + r*Math.sin(t)).toFixed(1) + ' ' + (cy - r*Math.cos(t)).toFixed(1); };
    out += `<path d="M${cx} ${cy}L${p(a)}A${r} ${r} 0 ${end-a>50?1:0} 1 ${p(end)}Z" fill="${col}" stroke="#fff" stroke-opacity=".35" stroke-width="1"/>`;
    a = end;
  }
  return out;
}
const labels = l => l.map(([a,c,y,s]) => tx(a,c,y+13,s,37,'fill="#605e5c"')).join('');
const lines = l => l.map(d => `<path d="M${d}" fill="none" stroke="#bdbbb9" stroke-width="3"/>`).join('');
const cols = ['#118dff','#12239e','#e66c37','#6b007b','#e044a7','#744ec2','#d9b300','#d64550'];
const ys = [216,294,372,449,528,604,682];
const legend = (x, list) => list.map(([s,w],i) => `<circle cx="${x}" cy="${ys[i]}" r="15.500" fill="${cols[i]}"/>` + tx(x+24,x+24+w,ys[i]+15,s,42,'fill="#605e5c"')).join('');

$('pie1').innerHTML = pie(560,474,261,[[10.1,cols[0]],[20.1,cols[1]],[29.950,cols[2]],[39.350,cols[3]],[46.640,cols[4]],[53.560,cols[5]],[59.160,cols[6]],[62.660,cols[7]],[65.800,'#197278'],[68.600,'#1aab40'],[71.400,'#15c6f4'],[74.150,'#4092ff'],[76.870,'#ffa058'],[79.150,'#be5dc9'],[81.300,'#f472d0'],[83.100,'#b5a1ff'],[84.830,'#c4a200'],[86.350,'#ff8080'],[88,'#00dbbc'],[89.500,'#5bd667'],[90.600,'#0091d5'],[91.600,'#4668c5'],[92.600,'#ff6300'],[93.400,'#99008a'],[94.200,'#ec008c'],[94.900,'#533285'],[95.500,'#99700a'],[96.100,'#ff4141'],[96.600,'#1f9a85'],[97.100,'#25891c'],[97.500,'#0057a2'],[97.900,'#002050'],[98.250,'#c94f0f'],[98.550,'#450f54'],[98.850,'#b60064'],[99.100,'#34124f'],[99.350,'#6a5a29'],[99.600,'#1aab40'],[99.800,'#ba141a'],[100,'#0c3d37']])
 + lines(['642 220L650 194H689','777 319L797 303H836','823 516Q850 521 888 520','779 627L802 642H839','672 714L684 740H722','558 742V769H519','391 681L374 703H335','343 629L322 648H284','305 557L284 565H240','293 455Q262 452 228 452','311 378L286 369H247','338 326L317 310H277','385 270L369 251H330','460 225L449 201H411'])
 + labels([[702,945,197,'10.10% (10.1%)'],[849,1066,305,'10.00% (10%)'],[900,996,497,'9.85%'],[900,1018,549,'(9.85%)'],[850,1057,643,'9.40% (9.4%)'],[734,961,743,'7.29% (7.29%)'],[282,508,770,'6.92% (6.92%)'],[118,324,703,'3.50% (3.5%)'],[68,271,650,'3.16% (3.1...)'],[134,229,542,'2.74%'],[111,229,593,'(2.74%)'],[120,216,431,'2.72%'],[98,216,479,'(2.72%)'],[51,235,371,'2.17% (2....)'],[64,265,311,'1.73% (1.7...)'],[94,317,254,'1.44% (1.44%)'],[174,400,203,'0.76% (0.76%)']])
 + tx(1087,1248,165,'Industry',40,'font-weight="600" fill="#605e5c"')
 + legend(1103.500,[['Life Insurance',247],['n/a',59],['Computer Software...',379],['Real Estate Investm...',376],['Business Services',307],['Major Pharmaceuti...',370],['Major Banks',221]])
 + '<path d="M1297 797h36l-18 17z" fill="#252423"/>';

$('pie2').innerHTML = pie(599,474,265,[[71.990,cols[0]],[79.670,cols[1]],[86.470,cols[2]],[89.690,cols[3]],[92.550,cols[4]],[95.030,cols[5]],[96.900,cols[6]],[98.400,cols[7]],[99.250,'#197278'],[99.800,'#1aab40'],[100,'#15c6f4']])
 + lines(['532 736L525 763H487','334 428Q305 422 268 423','363 344L341 329H301','416 276L398 256H359','496 224L486 200H447'])
 + labels([[209,436,203,'2.48% (2.48%)'],[121,347,257,'3.22% (3.22%)'],[83,288,332,'6.80% (6.8%)'],[160,256,402,'7.68%'],[138,256,449,'(7.68%)'],[210,475,764,'71.99% (71.99%)']])
 + tx(1160,1315,165,'Country',40,'font-weight="600" fill="#605e5c"')
 + legend(1177,[['United States',238],['Ghana',114],['India',87],['Germany',162],['China',100],['Spain',98],['Canada',133]])
 + '<path d="M1299 797h35l-18 17z" fill="#252423"/>';

// Map legend, labels and country markers
let m = tx(61,255,182,'Industry...',40,'font-weight="600" fill="#605e5c"');
cols.forEach((c,i) => { const x = 298 + i*77.800; m += `<circle cx="${x}" cy="167" r="15.500" fill="${c}"/>` + tx(x+22,x+43,183,i,40,'fill="#605e5c"'); });
m += '<path d="M936 149l16 17-16 17z" fill="#252423"/>';
const halo = 'font-weight="700" fill="#2e2e2e" stroke="#fff" stroke-width="4" paint-order="stroke"';
m += tx(60,217,404,'AMERICA',34,halo)+tx(545,679,422,'EUROPE',34,halo)+`<g clip-path="url(#mc)">${tx(920,964,393,'AS',34,halo)}</g>`+tx(555,680,656,'AFRICA',34,halo)+tx(139,431,754,'SOUTH AMERICA',34,halo);
const sea = 'fill="#4f6fb5" stroke="#4f6fb5" stroke-width=".6"';
m += tx(256,393,525,'Atlantic',34,sea)+tx(273,380,561,'Ocean',34,sea)+tx(799,908,757,'Indian',34,sea)+tx(799,908,794,'Ocean',34,sea);
m += '<path d="M77 768h13v13H77z" fill="#f25022"/><path d="M92 768h13v13H92z" fill="#7fba00"/><path d="M77 783h13v13H77z" fill="#00a4ef"/><path d="M92 783h13v13H92z" fill="#ffb900"/>';
m += tx(113,269,792,'Microsoft Bing',25,'fill="#737373"');
const cr = 'font-family="Liberation Sans" stroke="#fff" stroke-width="3" paint-order="stroke"';
m += tx(200,784,773,'© 2024 TomTom, © 2024 Microsoft Corporation,',26,cr+' fill="#222"')+tx(808,881,773,'Terms',26,cr+' fill="#2f55a4" text-decoration="underline"')+tx(562,786,804,'© OpenStreetMap',26,cr+' fill="#1f2fa8" text-decoration="underline"');
[[87,321,'#e66c37'],[76,486,'#6b9b3a'],[548,378,'#2fa34a'],[553,411,'#118dff'],[519,443,'#5a4ec2'],[492,480,'#d64550'],[604,488,'#1a8a60'],[503,638,'#197278'],[854,573,'#c23b50'],[276,719,'#e66c37'],[955,501,'#12239e']].forEach(([x,y,c]) => {
  m += `<g><circle cx="${x}" cy="${y}" r="9" fill="#20202a"/><path d="M${x} ${y}v-8a8 8 0 0 1 7 4zM${x} ${y}l-7 4a8 8 0 0 0 7 4z" fill="${c}"/><path d="M${x} ${y}l-7-4 3-3zM${x} ${y}l7 4 1-4z" fill="#d64550"/></g>`;
});
$('map').innerHTML += m;

// Labels carry a fixed run width; tracking absorbs the difference from the font's own width.
// It is measured again once styles and fonts are in place.
function fit() {
  document.querySelectorAll('[data-w],[data-h]').forEach(el => {
    el.style.letterSpacing = '0px';
    const r = document.createRange(); r.selectNodeContents(el);
    const box = r.getBoundingClientRect(), n = el.textContent.length;
    const want = +(el.dataset.w || el.dataset.h), has = el.dataset.w ? box.width : box.height;
    el.style.letterSpacing = ((want - has) / n).toFixed(3) + 'px';
  });
}
window.addEventListener('load', () => { fit(); requestAnimationFrame(fit); setTimeout(fit, 60); });
new MutationObserver(fit).observe(document.head, { childList: true });
document.fonts.ready.then(fit);
</script>
</body>
</html>
